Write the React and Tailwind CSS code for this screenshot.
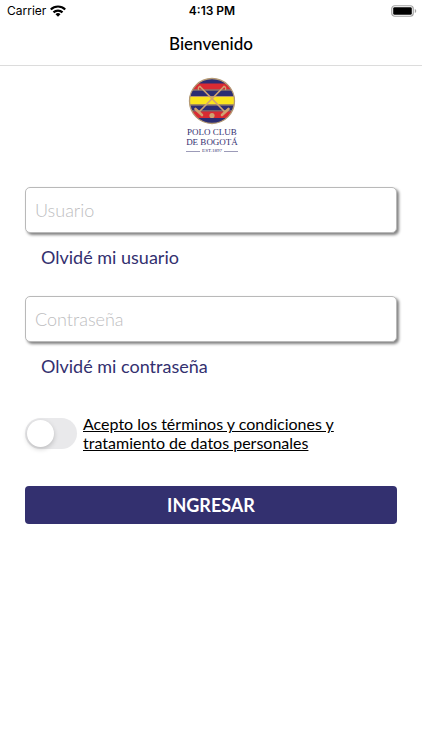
import React, { useState } from "react";

function WifiIcon() {
  return (
    <svg width="16" height="12" viewBox="0 0 16 12" aria-hidden="true">
      <g fill="none" stroke="#000" strokeWidth="2.2">
        <path d="M.8 4.500a10.200 10.200 0 0 1 14.400 0" />
        <path d="M3.500 7.400a6.400 6.400 0 0 1 9 0" />
      </g>
      <path d="M8 11.8 5.500 9.300a3.500 3.500 0 0 1 5 0z" />
    </svg>
  );
}

function BatteryIcon() {
  return (
    <svg width="26" height="12" viewBox="0 0 26 12" aria-hidden="true">
      <rect x="0.75" y="0.75" width="21.5" height="10.5" rx="3" fill="#fff" stroke="#a3a3a3" strokeWidth="1.2" />
      <rect x="2.2" y="2.2" width="18.6" height="7.6" rx="1.4" />
      <path d="M23.8 4v4c.9-.3 1.4-1 1.4-2s-.5-1.7-1.400-2z" fill="#a3a3a3" />
    </svg>
  );
}

function StatusBar() {
  return (
    <div className="grid grid-cols-3 items-center h-[22px] pl-[7px] pr-[5px] font-['Inter',sans-serif] text-xs text-black">
      <div className="flex items-center gap-1">
        <span>Carrier</span>
        <WifiIcon />
      </div>
      <span className="text-center font-semibold">4:13 PM</span>
      <div className="flex justify-end">
        <BatteryIcon />
      </div>
    </div>
  );
}

function ClubLogo() {
  return (
    <div className="flex flex-col items-center pl-[2px] font-['Liberation_Serif',serif] text-[#33306f]">
      <svg width="48" height="48" viewBox="0 0 48 48" aria-hidden="true">
        <defs>
          <clipPath id="crest">
            <circle cx="24" cy="24" r="22.5" />
          </clipPath>
        </defs>
        <g clipPath="url(#crest)">
          <rect width="48" height="48" fill="#2c2d72" />
          <rect y="6.5" width="48" height="6" fill="#d92b32" />
          <rect y="12.5" width="48" height="1" fill="#b8976a" />
          <rect y="19" width="48" height="1" fill="#b8976a" />
          <rect y="20" width="48" height="7.5" fill="#fbe51e" />
          <rect y="27.5" width="48" height="1" fill="#b8976a" />
          <rect y="33.5" width="48" height="1" fill="#b8976a" />
          <rect y="34.5" width="48" height="6.5" fill="#d92b32" />
        </g>
        <circle cx="24" cy="24" r="22.5" fill="none" stroke="#b59a74" strokeWidth="1.3" />
        {/* Crossed mallets and ball */}
        <g fill="none" stroke="#cfa271" strokeWidth="1.7" strokeLinecap="round">
          <path d="M12 9.500 37 35M36 9.500 11 35" />
          <path d="M12 9.500c-1.500.3-2 1.500-1.500 3M36 9.500c1.500.3 2 1.500 1.500 3" strokeWidth="1.300" />
          <path d="M7.500 32l6.500 6M40.500 32 34 38" strokeWidth="2.600" />
        </g>
        <circle cx="24" cy="38.5" r="2.600" fill="#cfa271" />
      </svg>
      <p className="mt-[2px] text-center text-[9px] leading-[10px]">
        POLO CLUB
        <br />
        DE BOGOTÁ
      </p>
      <div className="flex items-center gap-[2px] text-[5px] leading-[8px]">
        <span className="w-[14px] h-px bg-[#9c9bb8]" />
        <span>EST.1897</span>
        <span className="w-[14px] h-px bg-[#9c9bb8]" />
      </div>
    </div>
  );
}

function Field({ label, type, value, onChange, linkText }) {
  return (
    <div>
      <input
        type={type}
        aria-label={label}
        placeholder={label}
        value={value}
        onChange={(e) => onChange(e.target.value)}
        className="block w-full h-[46px] px-[9px] rounded-[5px] border border-[#b9b9b9] bg-white text-lg text-black placeholder:font-light placeholder:text-[#bdbdc0] shadow-[2px_2px_3px_0px_#808080] outline-none"
      />
      <a href="#" className="block w-fit mt-3 ml-4 text-lg leading-6 text-[#33306f]">
        {linkText}
      </a>
    </div>
  );
}

export default function App() {
  const [user, setUser] = useState("");
  const [password, setPassword] = useState("");
  const [accepted, setAccepted] = useState(false);

  return (
    <div className="min-h-screen bg-white font-['Lato',sans-serif] text-black">
      <StatusBar />

      {/* Navigation bar */}
      <header className="flex items-center justify-center h-11 border-b border-[#dcdcdc]">
        <h1 className="text-[17px] leading-6 font-medium">Bienvenido</h1>
      </header>

      <main className="px-6 pt-[11px]">
        <ClubLogo />

        <form className="mt-8 px-px" onSubmit={(e) => e.preventDefault()}>
          <div className="space-y-[27px]">
            <Field
              label="Usuario"
              type="text"
              value={user}
              onChange={setUser}
              linkText="Olvidé mi usuario"
            />
            <Field
              label="Contraseña"
              type="password"
              value={password}
              onChange={setPassword}
              linkText="Olvidé mi contraseña"
            />
          </div>

          {/* Terms switch */}
          <div className="flex items-center gap-[6px] mt-9">
            <input
              id="terminos"
              type="checkbox"
              role="switch"
              checked={accepted}
              onChange={(e) => setAccepted(e.target.checked)}
              className="flex-shrink-0 appearance-none flex items-center w-[52px] h-[31px] p-[2px] rounded-full bg-[#e9e9eb] checked:bg-[#33306f] checked:justify-end before:block before:size-[27px] before:rounded-full before:bg-white before:shadow-[0_2px_5px_rgba(0,0,0,0.2)]"
            />
            <label htmlFor="terminos" className="text-base leading-[19px] underline">
              Acepto los términos y condiciones y tratamiento de datos personales
            </label>
          </div>

          <button
            type="submit"
            className="w-full h-[38px] mt-[34px] rounded-[4px] bg-[#33306f] text-lg leading-6 font-bold text-white"
          >
            INGRESAR
          </button>
        </form>
      </main>
    </div>
  );
}
